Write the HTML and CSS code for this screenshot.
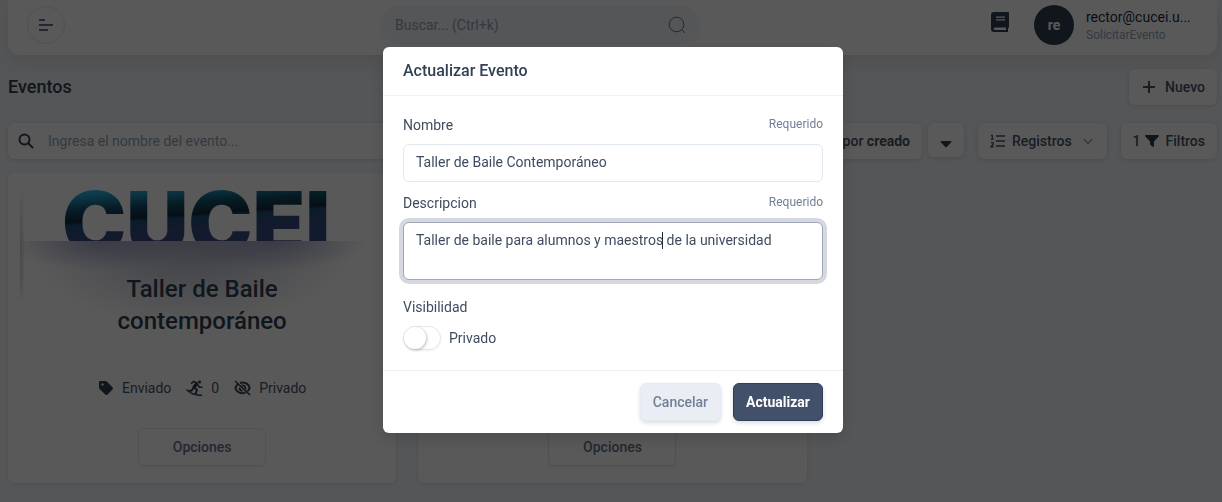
FILE: index.html
```html
<!DOCTYPE html>
<html lang="es">
<head>
<meta charset="utf-8">
<title>Eventos</title>
<meta name="viewport" content="width=device-width, initial-scale=1">
<link rel="stylesheet" href="styles.css">
</head>
<body>
<div class="page">
  <header class="topbar">
    <button class="menu-button" type="button" aria-label="Menú">
      <svg width="16" height="14" viewBox="0 0 16 14" fill="none" stroke="currentColor" stroke-width="2"><path d="M1 2h6M1 7h14M1 12h9"/></svg>
    </button>
    <div class="topbar-middle">
      <div class="global-search">
        <input class="global-search-input" type="text" placeholder="Buscar... (Ctrl+k)" aria-label="Buscar">
        <svg width="18" height="18" viewBox="0 0 18 18" fill="none" stroke="currentColor" stroke-width="1"><circle cx="8.500" cy="8.500" r="7.300"/><path d="M14 14l3 3"/></svg>
      </div>
    </div>
    <div class="account">
      <svg class="book" width="20" height="22" viewBox="0 0 20 22" fill="currentColor"><path fill-rule="evenodd" d="M4 1h14a1 1 0 0 1 1 1v14a1 1 0 0 1-1 1v3a1 1 0 0 1 0 1H4a3 3 0 0 1-3-3V4a3 3 0 0 1 3-3zM6 5.500v1.200h9V5.500zM6 8.300v1.200h9V8.300zM5 16.500a1 1 0 0 0 0 2.500h11v-2.500z"/></svg>
      <span class="avatar">re</span>
      <div class="account-text">
        <div class="account-name">rector@cucei.u...</div>
        <div class="account-role">SolicitarEvento</div>
      </div>
    </div>
  </header>

  <main>
    <div class="heading-row">
      <h1 class="page-title">Eventos</h1>
      <button class="tool-button" type="button">
        <svg class="plus" width="14" height="14" viewBox="0 0 14 14" fill="none" stroke="currentColor" stroke-width="2"><path d="M7 1v12M1 7h12"/></svg>
        Nuevo
      </button>
    </div>

    <div class="toolbar">
      <div class="event-search">
        <svg width="16" height="16" viewBox="0 0 16 16" fill="none" stroke="currentColor" stroke-width="2"><circle cx="6.500" cy="6.500" r="5"/><path d="M10 10l5 5"/></svg>
        <input class="event-search-input" type="text" placeholder="Ingresa el nombre del evento..." aria-label="Nombre del evento">
      </div>
      <div class="sort-group">
        <button class="tool-button sort-button" type="button"><span>Ordenar por <strong>creado</strong></span></button>
        <button class="tool-button caret-button" type="button" aria-label="Orden descendente">
          <svg width="12" height="8" viewBox="0 0 12 8" fill="currentColor"><path d="M1 1h10a.6.6 0 0 1 .4 1L6.700 7a1 1 0 0 1-1.400 0L.6 2A.6.6 0 0 1 1 1z"/></svg>
        </button>
      </div>
      <button class="tool-button list-button" type="button">
        <svg width="16" height="14" viewBox="0 0 16 14" fill="none" stroke="currentColor" stroke-width="1.600"><path d="M6 2h9M6 7h9M6 12h9"/><path stroke-width="1.300" d="M1 1.500h1.300V5M.8 5.200h3M.8 8.700h2.400v1.500L1 12.800h2.800"/></svg>
        Registros
        <svg class="chevron" width="10" height="7" viewBox="0 0 10 7" fill="none" stroke="currentColor" stroke-width="1"><path d="M1 1l4 4.500L9 1"/></svg>
      </button>
      <button class="tool-button filter-button" type="button">
        <span>1</span>
        <svg width="14" height="12" viewBox="0 0 14 12" fill="currentColor"><path d="M.7 0h12.600c.6 0 .9.700.5 1.200L9 6.500V11c0 .8-.7 1.200-1.300.8L5.500 10a1 1 0 0 1-.5-.8V6.500L.2 1.200C-.2.700.1 0 .7 0z"/></svg>
        <span class="filter-label">Filtros</span>
      </button>
    </div>

    <div class="cards">
      <article class="card">
        <div class="banner">
          <div class="banner-crop"><div class="banner-logo">CUCEI</div></div>
          <div class="banner-glow"></div>
        </div>
        <h2 class="card-title">Taller de Baile contemporáneo</h2>
        <div class="facts">
          <span class="fact"><svg width="16" height="16" viewBox="0 0 16 16" fill="currentColor"><path fill-rule="evenodd" d="M1 2a1 1 0 0 1 1-1h5.500a2 2 0 0 1 1.400.6l5.600 5.600a1.600 1.600 0 0 1 0 2.200l-5 5a1.600 1.600 0 0 1-2.200 0L1.600 9A2 2 0 0 1 1 7.600zM4.500 3.300a1.200 1.200 0 1 0 .01 0z"/></svg>Enviado</span>
          <span class="fact"><svg width="17" height="16" viewBox="0 0 17 16" fill="none" stroke="currentColor" stroke-linecap="round" stroke-linejoin="round"><circle cx="13.500" cy="2" r="1.600" fill="currentColor" stroke="none"/><path stroke-width="1.600" d="M5.500 3.300l2-1.800 3.500 1.500M11.500 4.500l2 2.700h2.500"/><path stroke-width="3.400" d="M10.300 4.200L8 7.300"/><path stroke-width="2" d="M8 7.500l3 2.200-1.300 3.800M7.200 8.500L5.500 10.700H3"/><path stroke-width="1.500" d="M.8 10l5 3.500 7 1.800h2.700"/></svg>0</span>
          <span class="fact"><svg width="17" height="16" viewBox="0 0 17 16" fill="none" stroke="currentColor"><path stroke-width="2" d="M4.200 4C2.700 5 1.700 6.800 1.400 8c.8 3 3.800 5.200 7.100 5.200 1.200 0 2.300-.2 3.200-.7M6 3c.8-.3 1.600-.4 2.500-.4 3.300 0 6.300 2.200 7.100 5.400-.3 1.100-1 2.300-2.200 3.200"/><path stroke-width="1.800" d="M5.600 7.500c-.2 1.800 1 3.300 2.900 3.300M7.500 5.500c2-.6 3.800.7 3.800 2.500 0 .5-.1.900-.3 1.200"/><path stroke-width="1.600" d="M1 1l15 14"/></svg>Privado</span>
        </div>
        <button class="options-button" type="button">Opciones</button>
      </article>
      <article class="card">
        <button class="options-button" type="button">Opciones</button>
      </article>
    </div>
  </main>
</div>

<div class="backdrop">
  <form class="modal" role="dialog" aria-modal="true" aria-labelledby="modal-title">
    <div class="modal-header"><h2 class="modal-title" id="modal-title">Actualizar Evento</h2></div>
    <div class="modal-body">
      <div class="field">
        <div class="field-head"><label for="nombre">Nombre</label><span class="hint">Requerido</span></div>
        <input class="control" id="nombre" type="text" value="Taller de Baile Contemporáneo">
      </div>
      <div class="field">
        <div class="field-head"><label for="descripcion">Descripcion</label><span class="hint">Requerido</span></div>
        <div class="editor">
          <textarea class="control control-area is-active" id="descripcion" rows="2">Taller de baile para alumnos y maestros de la universidad</textarea>
          <span class="text-cursor"></span>
        </div>
      </div>
      <div class="field visibility">
        <div class="field-head"><span>Visibilidad</span></div>
        <div class="switch-row"><input class="switch" id="privado" type="checkbox" role="switch"><label for="privado">Privado</label></div>
      </div>
    </div>
    <div class="modal-footer">
      <button class="button button-soft" type="button">Cancelar</button>
      <button class="button button-primary" type="submit">Actualizar</button>
    </div>
  </form>
</div>
</body>
</html>
```
FILE: styles.css
```css
* { box-sizing: border-box; }

body {
  margin: 0;
  background: #f1f5f9;
  color: #334155;
  font-family: Roboto, "Liberation Sans", sans-serif;
  font-size: 14px;
  line-height: 20px;
}

button, input, textarea { font: inherit; color: inherit; }
button { cursor: pointer; }
svg { flex: none; display: block; }
h1, h2 { margin: 0; }

.page { min-height: 100vh; padding: 0 5px 18px 8px; }

/* Top bar */
.topbar {
  display: flex;
  align-items: center;
  padding: 5px 26px 10px 19px;
  background: #fff;
  border-radius: 4px 4px 12px 12px;
  box-shadow: 0 6px 20px rgba(51, 65, 85, 0.12);
}
.menu-button {
  display: grid;
  place-items: center;
  width: 38px;
  height: 38px;
  padding: 0;
  border: 1px solid #e2e8f0;
  border-radius: 50%;
  background: none;
  color: #64748b;
}
.topbar-middle { flex: 1; display: flex; justify-content: center; padding-left: 25px; }
.global-search {
  display: flex;
  align-items: center;
  width: 320px;
  height: 38px;
  padding: 0 14px 0 15px;
  border-radius: 19px;
  background: #f1f5f9;
  color: #64748b;
}
.global-search-input { flex: 1; min-width: 0; padding: 0; border: 0; background: none; outline: 0; }
.global-search-input::placeholder { color: #94a3b8; opacity: 1; }
.account { display: flex; align-items: center; }
.book { color: #334155; margin-right: 24px; margin-bottom: 6px; }
.avatar {
  display: grid;
  place-items: center;
  width: 40px;
  height: 40px;
  margin-right: 12px;
  border-radius: 50%;
  background: #334155;
  color: #fff;
  font-weight: 700;
}
.account-text { width: 105px; }
.account-name { white-space: nowrap; color: #1e293b; line-height: 20px; }
.account-role { font-size: 12px; line-height: 16px; color: #94a3b8; }

/* Heading and tools */
.heading-row { display: flex; align-items: center; justify-content: space-between; margin-top: 14px; }
.page-title { font-size: 18px; line-height: 28px; font-weight: 500; }
.tool-button {
  display: flex;
  align-items: center;
  height: 36px;
  padding: 0 12px;
  border: 0;
  border-radius: 6px;
  background: #fff;
  box-shadow: 0 1px 4px rgba(51, 65, 85, 0.16);
  color: #475569;
  font-weight: 500;
  white-space: nowrap;
}
.plus { margin: 0 9px 0 1px; }
.toolbar { display: flex; align-items: flex-start; gap: 14px; margin-top: 18px; }
.event-search {
  flex: 1;
  min-width: 0;
  display: flex;
  align-items: center;
  gap: 14px;
  height: 36px;
  padding: 0 10px;
  border-radius: 6px;
  background: #fff;
  box-shadow: 0 1px 4px rgba(51, 65, 85, 0.16);
}
.event-search-input { flex: 1; min-width: 0; padding: 0; border: 0; outline: 0; background: none; }
.event-search-input::placeholder { color: #94a3b8; opacity: 1; }
.sort-group { display: flex; gap: 6px; }
.sort-button strong { font-weight: 700; }
.caret-button { height: 34px; padding: 8px 12px 0; color: #334155; }
.list-button { gap: 6px; }
.chevron { margin: 0 2px 0 5px; }
.filter-button { gap: 4px; }
.filter-button svg { color: #334155; }
.filter-label { margin-left: 3px; }

/* Cards */
.cards { display: grid; grid-template-columns: repeat(3, 1fr); gap: 22px; margin-top: 14px; }
.card {
  display: flex;
  flex-direction: column;
  align-items: center;
  padding: 11px 12px 17px;
  border-radius: 6px;
  background: #fff;
  box-shadow: 0 1px 4px rgba(51, 65, 85, 0.12);
}
.banner { position: relative; align-self: stretch; height: 89px; }
.banner::before {
  content: "";
  position: absolute;
  left: 0;
  top: 0;
  width: 5px;
  height: 118px;
  border-radius: 4px 0 0 4px;
  background: linear-gradient(90deg, rgba(51, 65, 85, 0.22), transparent);
  -webkit-mask-image: linear-gradient(transparent, #000 40%, #000 85%, transparent);
  mask-image: linear-gradient(transparent, #000 40%, #000 85%, transparent);
}
.banner-crop { height: 57px; padding-right: 12px; overflow: hidden; display: flex; justify-content: center; }
.banner-logo {
  font-family: Inter, "Liberation Sans", sans-serif;
  font-size: 86px;
  line-height: 78px;
  font-weight: 900;
  color: transparent;
  background: linear-gradient(176deg, #2ec8f0 8%, #2499c4 20%, #13506a 36%, #122b40 52%, #1f4f78 56%, #3a4a80 74%);
  -webkit-background-clip: text;
  background-clip: text;
}
.banner-glow {
  height: 96px;
  margin: 0 8px 0 0;
  background:
    radial-gradient(ellipse 26% 30% at 22% 0, rgba(80, 84, 150, 0.4), transparent),
    radial-gradient(ellipse 26% 30% at 72% 0, rgba(80, 84, 150, 0.4), transparent),
    radial-gradient(ellipse 46% 90% at 48% 0, rgba(90, 100, 140, 0.5), rgba(90, 100, 140, 0.2) 55%, transparent);
}
.card-title {
  position: relative;
  width: 240px;
  font-size: 24px;
  line-height: 32px;
  font-weight: 500;
  text-align: center;
}
.facts { display: flex; justify-content: center; gap: 15px; margin-top: 41px; }
.fact { display: flex; align-items: center; gap: 8px; color: #475569; }
.fact svg { color: #334155; }
.options-button {
  width: 128px;
  height: 38px;
  margin-top: auto;
  border: 1px solid #e2e8f0;
  border-radius: 6px;
  background: none;
  box-shadow: 0 1px 2px rgba(51, 65, 85, 0.08);
  color: #64748b;
  font-weight: 500;
}
.facts + .options-button { margin-top: 30px; }

/* Modal */
.backdrop {
  position: fixed;
  inset: 0;
  display: flex;
  align-items: flex-start;
  justify-content: center;
  padding: 47px 0 20px 4px;
  overflow: auto;
  background: rgba(0, 0, 0, 0.65);
}
.modal {
  width: 100%;
  max-width: 460px;
  border-radius: 6px;
  background: #fff;
  box-shadow: 0 6px 16px rgba(0, 0, 0, 0.15);
}
.modal-header { padding: 12px 20px; border-bottom: 1px solid #edf0f4; }
.modal-title { font-size: 16px; line-height: 24px; font-weight: 500; }
.modal-body { padding: 19px 20px 20px; color: #3f4c60; }
.field + .field { margin-top: 11px; }
.field + .visibility { margin-top: 17px; }
.field-head { display: flex; justify-content: space-between; margin-bottom: 9px; }
.hint { font-size: 12px; line-height: 18px; color: #718096; }
.control {
  display: block;
  width: 100%;
  height: 38px;
  padding: 7px 12px 9px;
  border: 1px solid #e2e8f0;
  border-radius: 6px;
  background: #fff;
  outline: 0;
}
.control-area { height: 58px; resize: none; overflow: hidden; }
.is-active { border-color: #a0a7b5; box-shadow: 0 0 0 4px #d5d8df; }
.editor { position: relative; }
.text-cursor { position: absolute; left: 259px; top: 10px; width: 1px; height: 17px; background: #1e293b; }
.switch-row { display: flex; align-items: center; gap: 8px; }
.switch {
  appearance: none;
  width: 38px;
  height: 24px;
  margin: 0;
  border: 1px solid #e2e8f0;
  border-radius: 12px;
  background: #fff;
  box-shadow: 0 1px 2px rgba(0, 0, 0, 0.06);
}
.switch::before {
  content: "";
  display: block;
  width: 22px;
  height: 22px;
  border-radius: 50%;
  background: #fff;
  box-shadow: 1px 1px 3px rgba(0, 0, 0, 0.25);
}
.switch:checked { background: #42506a; }
.switch:checked::before { margin-left: 14px; }
.modal-footer {
  display: flex;
  justify-content: flex-end;
  gap: 12px;
  padding: 12px 20px;
  border-top: 1px solid #edf0f4;
}
.button {
  height: 38px;
  padding: 0 12px;
  border: 1px solid;
  border-radius: 6px;
  box-shadow: 0 2px 4px rgba(0, 0, 0, 0.14);
}
.button-soft { background: #eaeef4; border-color: #e6ebf2; color: #718096; font-weight: 500; }
.button-primary { background: #425069; border-color: #2f3e59; color: #fff; font-weight: 700; }
```
